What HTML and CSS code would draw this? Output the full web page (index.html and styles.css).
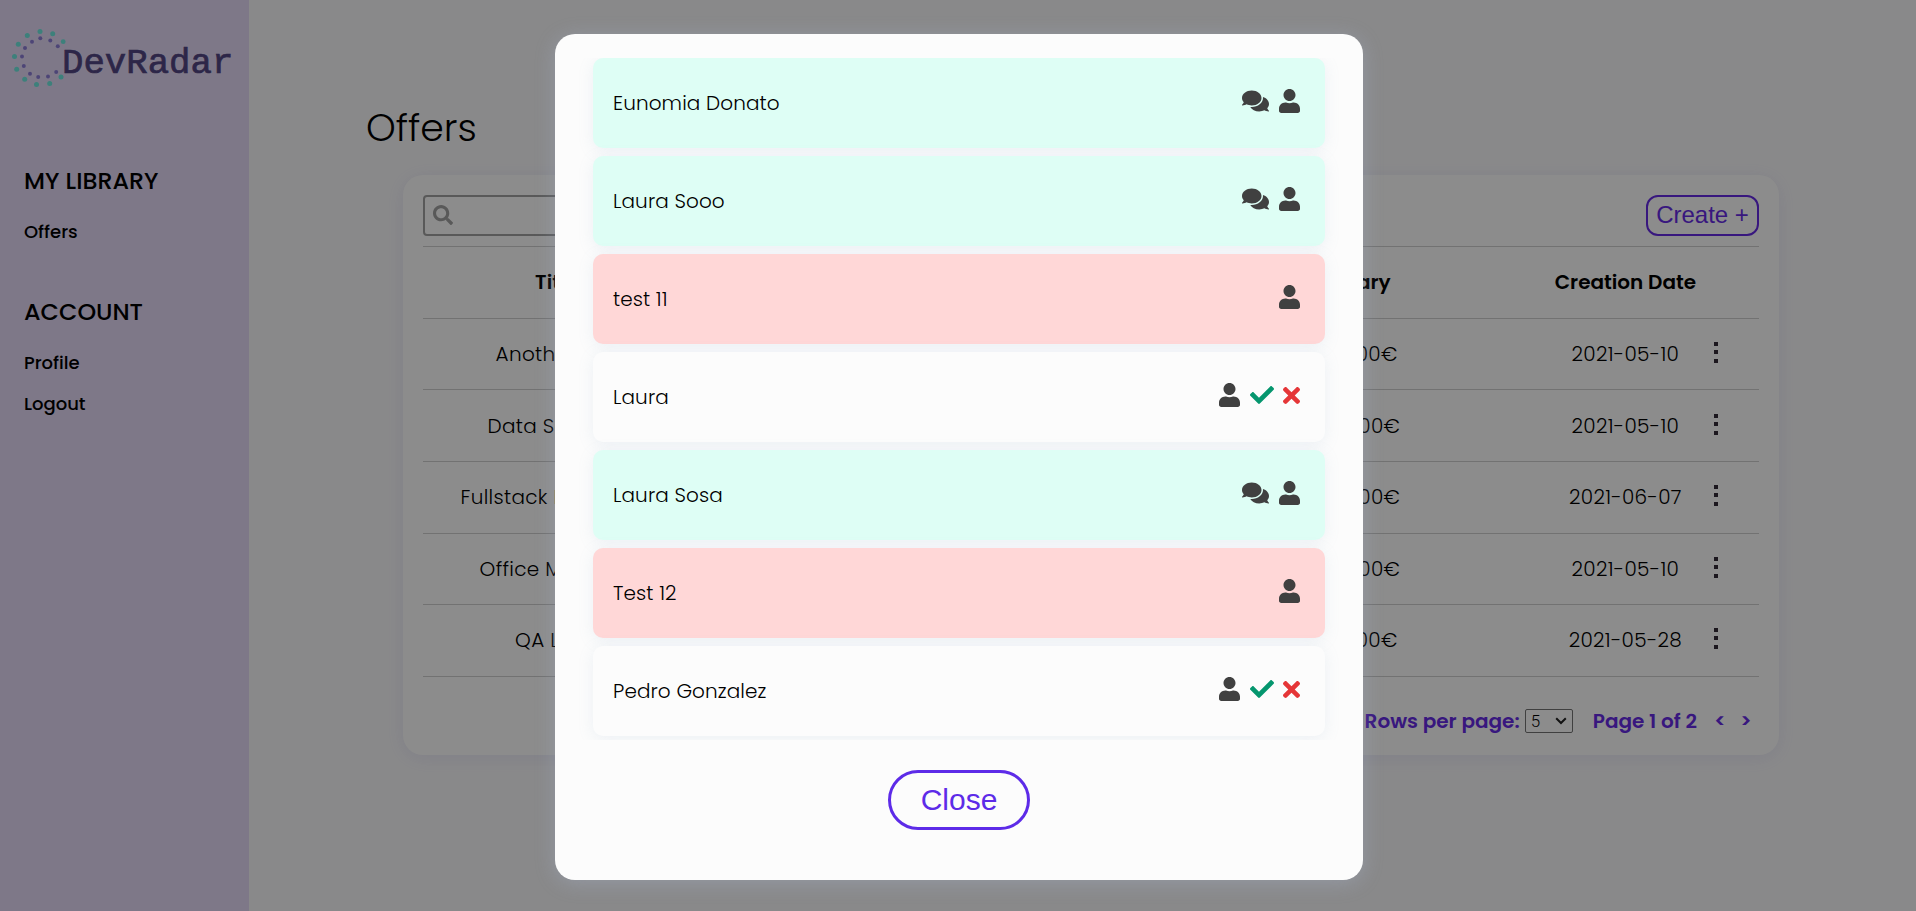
FILE: index.html
```html
<!DOCTYPE html>
<html lang="en">
<head>
<meta charset="utf-8">
<title>DevRadar</title>
<link rel="stylesheet" href="styles.css">
</head>
<body>
<svg class="defs" aria-hidden="true">
  <symbol id="user" viewBox="0 0 448 512"><path d="M224 256c70.7 0 128-57.3 128-128S294.7 0 224 0 96 57.3 96 128s57.3 128 128 128zm89.6 32h-16.7c-22.2 10.2-46.9 16-72.9 16s-50.6-5.8-72.9-16h-16.7C60.2 288 0 348.2 0 422.4V464c0 26.5 21.5 48 48 48h352c26.5 0 48-21.5 48-48v-41.6c0-74.2-60.2-134.4-134.4-134.4z"/></symbol>
  <symbol id="comments" viewBox="0 0 576 512"><path d="M416 192c0-88.4-93.1-160-208-160S0 103.600 0 192c0 34.300 14.100 65.900 38 92-13.400 30.200-35.500 54.200-35.800 54.500-2.200 2.300-2.800 5.700-1.500 8.700S4.800 352 8 352c36.600 0 66.900-12.300 88.700-25 32.200 15.700 70.300 25 111.300 25 114.900 0 208-71.600 208-160zm122 220c23.900-26 38-57.700 38-92 0-66.900-53.500-124.200-129.300-148.100.9 6.600 1.300 13.300 1.300 20.100 0 105.900-107.700 192-240 192-10.800 0-21.300-.8-31.700-1.900C207.800 439.600 281.800 480 368 480c41 0 79.100-9.200 111.300-25 21.800 12.700 52.100 25 88.700 25 3.200 0 6.100-1.900 7.300-4.800 1.300-2.900.7-6.300-1.500-8.700-.3-.3-22.400-24.200-35.800-54.500z"/></symbol>
  <symbol id="check" viewBox="0 0 512 512"><path d="M173.898 439.404l-166.400-166.400c-9.997-9.997-9.997-26.206 0-36.204l36.203-36.204c9.997-9.998 26.207-9.998 36.204 0L192 312.690 432.095 72.596c9.997-9.997 26.207-9.997 36.204 0l36.203 36.204c9.997 9.997 9.997 26.206 0 36.204l-294.400 294.401c-9.998 9.997-26.207 9.997-36.204-.001z"/></symbol>
  <symbol id="times" viewBox="0 0 352 512"><path d="M242.720 256l100.070-100.070c12.280-12.280 12.280-32.190 0-44.480l-22.240-22.240c-12.280-12.280-32.190-12.280-44.480 0L176 189.280 75.930 89.210c-12.280-12.280-32.190-12.280-44.480 0L9.210 111.450c-12.280 12.280-12.280 32.190 0 44.480L109.280 256 9.210 356.070c-12.280 12.280-12.280 32.190 0 44.480l22.240 22.240c12.280 12.280 32.200 12.280 44.480 0L176 322.720l100.070 100.070c12.280 12.280 32.200 12.280 44.480 0l22.240-22.240c12.280-12.280 12.280-32.190 0-44.480L242.720 256z"/></symbol>
  <symbol id="search" viewBox="0 0 512 512"><path d="M505 442.700L405.300 343c-4.500-4.500-10.600-7-17-7H372c27.600-35.300 44-79.700 44-128C416 93.100 322.900 0 208 0S0 93.100 0 208s93.100 208 208 208c48.300 0 92.700-16.400 128-44v16.300c0 6.400 2.500 12.500 7 17l99.700 99.700c9.400 9.400 24.600 9.400 33.900 0l28.300-28.300c9.400-9.400 9.400-24.600.1-34zM208 336c-70.700 0-128-57.200-128-128 0-70.700 57.200-128 128-128 70.700 0 128 57.200 128 128 0 70.700-57.200 128-128 128z"/></symbol>
</svg>

<div class="app">
  <aside class="sidebar">
    <div class="logo">
      <svg class="radar" viewBox="0 0 58 62">
        <g class="outer"><circle cx="28" cy="5.500" r="2.500"/><circle cx="40.700" cy="7.800" r="2.500"/><circle cx="51.200" cy="15.700" r="2.400"/><circle cx="15.300" cy="9.500" r="2.500"/><circle cx="6.300" cy="18.300" r="2.500"/><circle cx="2.500" cy="30.600" r="2.500"/><circle cx="4.700" cy="43.200" r="2.500"/><circle cx="12.700" cy="53.200" r="2.500"/><circle cx="24.500" cy="58.400" r="2.500"/><circle cx="37.700" cy="57.600" r="2.500"/><circle cx="49" cy="51" r="2.500"/></g>
        <g class="inner"><circle cx="28.300" cy="12.200" r="2"/><circle cx="38.300" cy="14.400" r="2"/><circle cx="45.800" cy="20.300" r="2"/><circle cx="20" cy="15.700" r="2"/><circle cx="13" cy="22" r="2"/><circle cx="10" cy="30.600" r="2"/><circle cx="11.800" cy="40" r="2"/><circle cx="18" cy="47.700" r="2"/><circle cx="26.200" cy="51" r="2"/><circle cx="36" cy="50.400" r="2"/><circle cx="44.200" cy="46" r="2"/></g>
      </svg>
      <span class="brand">DevRadar</span>
    </div>
    <nav>
      <h2>MY LIBRARY</h2>
      <a>Offers</a>
      <h2 class="second">ACCOUNT</h2>
      <a>Profile</a>
      <a>Logout</a>
    </nav>
  </aside>

  <main class="main">
    <h1>Offers</h1>
    <section class="card">
      <div class="toolbar">
        <div class="search"><svg><use href="#search"/></svg></div>
        <button class="create">Create +</button>
      </div>
      <div class="table">
        <div class="row head"><span class="w-title">Title</span><span></span><span></span><span>Salary</span><div class="date"><b>Creation Date</b></div></div>
        <div class="row"><span class="w-another">Another offer</span><span></span><span></span><span>20000€</span><div class="date"><b>2021-05-10</b><i class="dots"></i></div></div>
        <div class="row"><span class="w-data">Data Scientist</span><span></span><span></span><span class="wide">30000€</span><div class="date"><b>2021-05-10</b><i class="dots"></i></div></div>
        <div class="row"><span class="w-full">Fullstack Dev</span><span></span><span></span><span class="wide">30000€</span><div class="date"><b>2021-06-07</b><i class="dots"></i></div></div>
        <div class="row"><span class="w-office">Office Manager</span><span></span><span></span><span class="wide">30000€</span><div class="date"><b>2021-05-10</b><i class="dots"></i></div></div>
        <div class="row"><span class="w-qa">QA Lead</span><span></span><span></span><span>20000€</span><div class="date"><b>2021-05-28</b><i class="dots"></i></div></div>
      </div>
      <div class="pager">
        <span class="rows">Rows per page:</span>
        <span class="select">5<svg viewBox="0 0 12 8"><path d="M1.200 1.200L6 6l4.800-4.800"/></svg></span>
        <span class="page">Page 1 of 2</span>
        <span class="prev">&lt;</span>
        <span class="next">&gt;</span>
      </div>
    </section>
  </main>
</div>

<div class="overlay">
  <div class="modal">
    <div class="list">
      <div class="item accepted"><span>Eunomia Donato</span><div class="icons"><svg class="comments"><use href="#comments"/></svg><svg class="user"><use href="#user"/></svg></div></div>
      <div class="item accepted"><span>Laura Sooo</span><div class="icons"><svg class="comments"><use href="#comments"/></svg><svg class="user"><use href="#user"/></svg></div></div>
      <div class="item rejected"><span>test 11</span><div class="icons"><svg class="user"><use href="#user"/></svg></div></div>
      <div class="item"><span>Laura</span><div class="icons"><svg class="user"><use href="#user"/></svg><svg class="check"><use href="#check"/></svg><svg class="times"><use href="#times"/></svg></div></div>
      <div class="item accepted"><span>Laura Sosa</span><div class="icons"><svg class="comments"><use href="#comments"/></svg><svg class="user"><use href="#user"/></svg></div></div>
      <div class="item rejected"><span>Test 12</span><div class="icons"><svg class="user"><use href="#user"/></svg></div></div>
      <div class="item"><span>Pedro Gonzalez</span><div class="icons"><svg class="user"><use href="#user"/></svg><svg class="check"><use href="#check"/></svg><svg class="times"><use href="#times"/></svg></div></div>
    </div>
    <button class="close">Close</button>
  </div>
</div>
</body>
</html>
```
FILE: styles.css
```css
* { box-sizing: border-box; }
body {
  margin: 0;
  height: 911px;
  overflow: hidden;
  font-family: Poppins, Inter, "Open Sans", sans-serif;
  font-size: 20px;
  font-weight: 300;
  color: #000;
  background: #fafafc;
}
.defs { position: absolute; width: 0; height: 0; }
.app { display: flex; height: 911px; }

.sidebar { width: 249px; background: #e5dbf8; padding: 26px 0 0 12px; }
.logo { display: flex; height: 62px; }
.radar { width: 58px; height: 62px; flex: none; }
.outer { fill: #6fe9e0; }
.inner { fill: #8d7fd8; }
.brand {
  margin-left: -8px;
  padding-top: 18px;
  font: 400 35.700px/40px "Liberation Mono", monospace;
  -webkit-text-stroke: .7px #524583;
  color: #524583;
}
nav { padding: 75px 0 0 12px; display: flex; flex-direction: column; }
nav h2 { margin: 0 0 15px; font-size: 23.800px; line-height: 36px; font-weight: 500; }
nav h2.second { margin-top: 39px; }
nav a { font-size: 18px; line-height: 35px; margin-bottom: 6px; font-weight: 500; }

.main { flex: 1; padding: 98px 137px 0 117px; }
h1 { margin: 0; font-size: 37.800px; line-height: 60px; font-weight: 300; }
.card {
  margin: 17px 0 0 37px;
  width: 1376px;
  height: 580px;
  padding: 20px;
  border-radius: 20px;
  background: #fff;
  box-shadow: 0 3px 20px rgba(108, 100, 200, .11);
}
.toolbar { display: flex; justify-content: space-between; height: 51px; }
.search { width: 320px; height: 41px; border: 2px solid #a3a3a3; border-radius: 4px; padding: 8px; }
.search svg { width: 20px; height: 20px; display: block; fill: #a3a3a3; }
.create {
  width: 113px; height: 41px; padding: 0 0 2px;
  border: 2px solid #662be6; border-radius: 12px; background: none;
  color: #662be6; font: 24px "Liberation Sans", Arial, sans-serif;
}
.row {
  display: grid; grid-template-columns: repeat(5, 1fr);
  height: 71.670px; align-items: center; justify-items: center;
  border-top: 1px solid #cfcfcf;
  letter-spacing: .3px;
}
.row:last-child { height: 72.670px; padding-bottom: 1px; border-bottom: 1px solid #cfcfcf; }
.row span { white-space: nowrap; }
.row .wide { padding-left: 5px; }
.head, .head b { font-weight: 600; letter-spacing: 0; }
.date { width: 100%; display: grid; grid-template-columns: 1fr auto 1fr; align-items: center; }
.date b { grid-column: 2; text-align: center; white-space: nowrap; }
.row:not(.head) b { font-weight: 300; }
.dots {
  justify-self: end; margin-right: 41px; margin-bottom: 3px;
  width: 4px; height: 21px;
  background: linear-gradient(#332b38 0 4px, transparent 4px 8px, #332b38 8px 12px, transparent 12px 17px, #332b38 17px);
}
.w-title { width: 43px; }
.w-another { width: 122px; }
.w-data { width: 138px; }
.w-full { width: 192px; }
.w-office { width: 154px; }
.w-qa { width: 83px; }
.pager { display: flex; align-items: center; justify-content: flex-end; height: 88px; padding-right: 7px; color: #662be6; font-weight: 600; }
.select {
  display: flex; align-items: center; justify-content: space-between;
  width: 48px; height: 24px; margin: 0 20px 0 5px; padding: 0 5px;
  border: 1px solid #767676; border-radius: 2px;
  font-size: 17px; font-family: Roboto, "Liberation Sans", sans-serif; font-weight: 300; color: #000; background: #fff;
}
.select svg { width: 12px; height: 8px; fill: none; stroke: #222; stroke-width: 2; }
.prev, .next { width: 12px; text-align: center; }
.prev { margin-left: 17px; }
.next { margin-left: 14px; }

.overlay { position: absolute; inset: 0; background: rgba(0, 0, 0, .45); display: flex; justify-content: center; padding: 34px 0 0 2px; }
.modal {
  width: 808px; height: 846px; padding-top: 24px;
  border-radius: 20px; background: #fcfcfc;
  box-shadow: 0 3px 20px rgba(180, 200, 240, .26);
  display: flex; flex-direction: column; align-items: center;
}
.list { width: 772px; height: 682px; padding: 0 20px; overflow: hidden; }
.item {
  height: 90px; margin-bottom: 8px; padding: 0 25px 0 20px;
  display: flex; align-items: center; justify-content: space-between;
  border-radius: 10px; background: #fcfcfc;
  box-shadow: 0 3px 16px rgba(130, 160, 190, .13);
}
.accepted { background: #defef5; }
.rejected { background: #ffd7d7; }
.item span { white-space: nowrap; letter-spacing: .1px; }
.icons { display: flex; gap: 10px; margin-bottom: 4px; fill: #404040; }
.icons svg { height: 24px; display: block; }
.user { width: 21px; }
.comments { width: 27px; }
.check { width: 24px; fill: #05966e; }
.icons .times { width: 17px; height: 25px; margin-left: -1px; fill: #e53638; }
.close {
  width: 142px; height: 60px; margin-top: 30px; padding: 0 0 1px;
  border: 3px solid #5d2be8; border-radius: 30px; background: none;
  color: #5d2be8; font: 30px "Liberation Sans", Arial, sans-serif;
}
```
